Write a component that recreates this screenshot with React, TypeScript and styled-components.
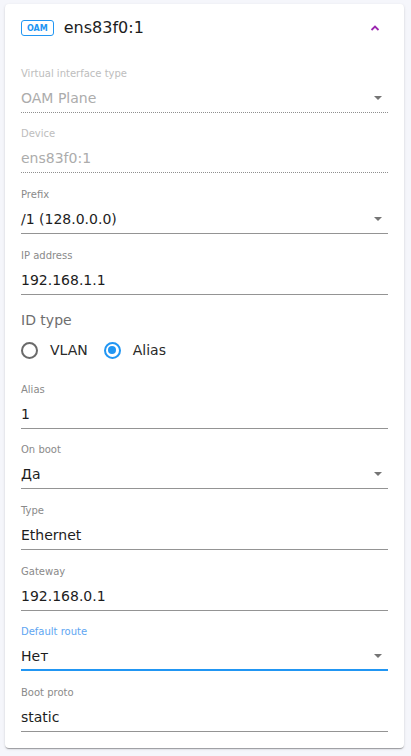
import React from 'react';
import styled, { createGlobalStyle, css } from 'styled-components';

type FieldData = {
  label: string;
  value: string;
  select?: boolean;
  disabled?: boolean;
  focused?: boolean;
};

const TOP_FIELDS: FieldData[] = [
  { label: 'Virtual interface type', value: 'OAM Plane', select: true, disabled: true },
  { label: 'Device', value: 'ens83f0:1', disabled: true },
  { label: 'Prefix', value: '/1 (128.0.0.0)', select: true },
  { label: 'IP address', value: '192.168.1.1' },
];

const BOTTOM_FIELDS: FieldData[] = [
  { label: 'Alias', value: '1' },
  { label: 'On boot', value: 'Да', select: true },
  { label: 'Type', value: 'Ethernet' },
  { label: 'Gateway', value: '192.168.0.1' },
  { label: 'Default route', value: 'Нет', select: true, focused: true },
  { label: 'Boot proto', value: 'static' },
];

function Field({ label, value, select, disabled, focused }: FieldData) {
  return (
    <FieldWrap>
      <Label $disabled={disabled} $focused={focused}>
        {label}
      </Label>
      <InputRow $disabled={disabled} $focused={focused}>
        <Value $disabled={disabled}>{value}</Value>
        {select && <Caret />}
      </InputRow>
    </FieldWrap>
  );
}

export default function App() {
  return (
    <>
      <GlobalStyle />
      <Page>
        <Card>
          <Header>
            <Badge>OAM</Badge>
            <Title>ens83f0:1</Title>
            <Collapse>
              <svg width="10" height="6" viewBox="0 0 10 6">
                <path d="M1.5 5 L5 1.6 L8.5 5" fill="none" stroke="#9c27b0" strokeWidth="1.8" />
              </svg>
            </Collapse>
          </Header>
          {TOP_FIELDS.map(f => (
            <Field key={f.label} {...f} />
          ))}
          <RadioGroup>
            <GroupLabel>ID type</GroupLabel>
            <RadioRow>
              <RadioOption>
                <RadioCircle />
                VLAN
              </RadioOption>
              <RadioOption>
                <RadioCircle $checked />
                Alias
              </RadioOption>
            </RadioRow>
          </RadioGroup>
          {BOTTOM_FIELDS.map(f => (
            <Field key={f.label} {...f} />
          ))}
        </Card>
      </Page>
    </>
  );
}

const GlobalStyle = createGlobalStyle`
  html, body {
    margin: 0;
    background: #f5f6fb;
    font-family: "DejaVu Sans", "Open Sans", sans-serif;
  }
`;

const Page = styled.div`
  padding: 4px 7px 9px 5px;
`;

const Card = styled.div`
  background: #fff;
  border-radius: 4px;
  box-shadow: 0 2px 1px -1px rgba(0, 0, 0, 0.2), 0 1px 1px 0 rgba(0, 0, 0, 0.14),
    0 1px 3px 0 rgba(0, 0, 0, 0.12);
  padding: 16px;
`;

const Header = styled.div`
  height: 16px;
  display: flex;
  align-items: center;
  margin-bottom: 16px;
`;

const Badge = styled.div`
  height: 16px;
  box-sizing: border-box;
  padding: 0 5px;
  border: 1px solid #2196f3;
  border-radius: 3px;
  color: #2196f3;
  font-size: 8px;
  font-weight: 600;
  display: flex;
  align-items: center;
`;

const Title = styled.div`
  margin-left: 10px;
  font-size: 16px;
  color: #1d1d1d;
  line-height: 16px;
`;

const Collapse = styled.div`
  margin-left: auto;
  margin-right: 8px;
  display: flex;
`;

const FieldWrap = styled.div`
  padding-top: 14.67px;
`;

const Label = styled.div<{ $disabled?: boolean; $focused?: boolean }>`
  font-size: 10px;
  line-height: 14px;
  color: ${p => (p.$focused ? '#5ea6f2' : p.$disabled ? '#bdbdbd' : '#8a8a8a')};
`;

const InputRow = styled.div<{ $disabled?: boolean; $focused?: boolean }>`
  display: flex;
  align-items: center;
  padding: 5px 0 2px;
  height: 24px;
  border-bottom: 1px solid #949494;
  ${p =>
    p.$disabled &&
    css`
      border-bottom: 1px dotted #8f8f8f;
    `}
  ${p =>
    p.$focused &&
    css`
      padding-bottom: 1px;
      border-bottom: 2px solid #2196f3;
    `}
`;

const Value = styled.div<{ $disabled?: boolean }>`
  flex: 1;
  font-size: 14px;
  line-height: 24px;
  color: ${p => (p.$disabled ? '#acacac' : '#1d1d1d')};
`;

const Caret = styled.span`
  width: 0;
  height: 0;
  margin-right: 6px;
  border-left: 4px solid transparent;
  border-right: 4px solid transparent;
  border-top: 4px solid #757575;
`;

const RadioGroup = styled.div`
  padding-top: 16px;
  height: 57.33px;
`;

const GroupLabel = styled.div`
  font-size: 14px;
  line-height: 18px;
  color: #6e6e6e;
`;

const RadioRow = styled.div`
  display: flex;
  gap: 16px;
  margin-top: 13px;
`;

const RadioOption = styled.label`
  display: flex;
  align-items: center;
  gap: 12px;
  font-size: 14px;
  color: #2a2a2a;
`;

const RadioCircle = styled.span<{ $checked?: boolean }>`
  width: 17px;
  height: 17px;
  box-sizing: border-box;
  border-radius: 50%;
  border: 2px solid ${p => (p.$checked ? '#2196f3' : '#6a6a6a')};
  display: flex;
  align-items: center;
  justify-content: center;
  &::after {
    content: '';
    width: 8px;
    height: 8px;
    border-radius: 50%;
    background: ${p => (p.$checked ? '#2196f3' : 'transparent')};
  }
`;
